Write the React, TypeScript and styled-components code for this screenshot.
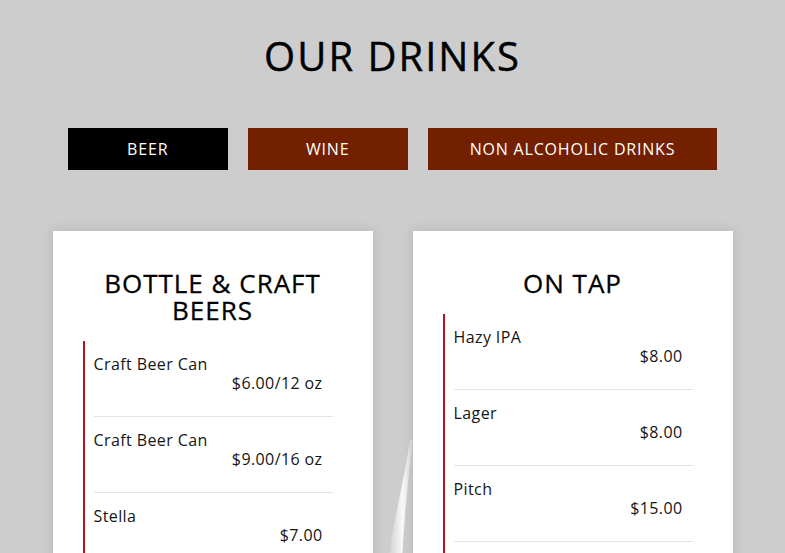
import React, { useState } from 'react';
import styled, { createGlobalStyle } from 'styled-components';

const GlobalStyle = createGlobalStyle`
  * {
    box-sizing: border-box;
  }

  body {
    margin: 0;
    background-color: #cdcdcd;
    font-family: 'Open Sans', 'Liberation Sans', sans-serif;
    color: #111;
  }
`;

const Page = styled.section`
  position: relative;
  min-height: 100vh;
  overflow: hidden;
  padding-top: 29px;
  display: flex;
  flex-direction: column;
  align-items: center;
`;

const Glare = styled.svg`
  position: absolute;
  left: 380px;
  top: 440px;
  width: 50px;
  height: 120px;
  pointer-events: none;
`;

const Title = styled.h1`
  position: relative;
  margin: 0;
  font-size: 40px;
  line-height: 54px;
  font-weight: 500;
  letter-spacing: 2px;
  color: #000;
  -webkit-text-stroke: 0.4px #000;
`;

const TabRow = styled.nav`
  position: relative;
  display: flex;
  gap: 20px;
  margin-top: 45px;
`;

const Tab = styled.button<{ $active: boolean }>`
  min-width: 160px;
  height: 42px;
  padding: 0 42px;
  border: none;
  font-family: inherit;
  font-size: 16px;
  letter-spacing: 0.8px;
  color: #fff;
  cursor: pointer;
  background-color: ${(props) => (props.$active ? '#000' : '#722000')};
`;

const Cards = styled.div`
  position: relative;
  display: flex;
  gap: 40px;
  margin-top: 61px;
`;

const Card = styled.div`
  width: 320px;
  background-color: #fff;
  padding: 39px 30px 0 30px;
  box-shadow: 0 0 12px rgba(0, 0, 0, 0.12);
  min-height: 340px;
`;

const CardTitle = styled.h2`
  margin: 0 0 17px 0;
  text-align: center;
  font-size: 26px;
  line-height: 27px;
  font-weight: 500;
  letter-spacing: 1px;
  color: #000;
  -webkit-text-stroke: 0.3px #000;
`;

const List = styled.ul`
  list-style: none;
  margin: 0 10px 0 0;
  padding: 0 0 0 9px;
  border-left: 2px solid #b3141f;
`;

const Item = styled.li`
  padding: 14px 10px 23px 0;
  border-bottom: 1px solid #e4e4e4;
  font-size: 16px;
  line-height: 19px;
  letter-spacing: 0.4px;
`;

const Name = styled.div`
  color: #151515;
`;

const Price = styled.div`
  text-align: right;
  color: #151515;
`;

const menus = {
  beer: [
    {
      title: 'BOTTLE & CRAFT BEERS',
      items: [
        { name: 'Craft Beer Can', price: '$6.00/12 oz' },
        { name: 'Craft Beer Can', price: '$9.00/16 oz' },
        { name: 'Stella', price: '$7.00' },
        { name: 'Corona', price: '$7.00' },
      ],
    },
    {
      title: 'ON TAP',
      items: [
        { name: 'Hazy IPA', price: '$8.00' },
        { name: 'Lager', price: '$8.00' },
        { name: 'Pitch', price: '$15.00' },
        { name: 'Pitcher', price: '$20.00' },
      ],
    },
  ],
};

const tabs = [
  { key: 'beer', label: 'BEER' },
  { key: 'wine', label: 'WINE' },
  { key: 'non', label: 'NON ALCOHOLIC DRINKS' },
];

const App = (): JSX.Element => {
  const [active, setActive] = useState('beer');
  const sections = menus.beer;

  return (
    <>
      <GlobalStyle />
      <Page>
        <Glare viewBox='0 0 50 120'>
          <defs>
            <linearGradient id='glare' x1='0' y1='0' x2='1' y2='0'>
              <stop offset='0' stopColor='#fff' stopOpacity='0' />
              <stop offset='0.6' stopColor='#fff' stopOpacity='0.9' />
              <stop offset='1' stopColor='#fff' stopOpacity='0.2' />
            </linearGradient>
          </defs>
          <path d='M30 0 C24 40 14 80 8 120 L22 120 C24 80 28 40 33 0 Z' fill='url(#glare)' />
        </Glare>
        <Title>OUR DRINKS</Title>
        <TabRow>
          {tabs.map((tab) => (
            <Tab
              key={tab.key}
              $active={active === tab.key}
              onClick={() => setActive(tab.key)}
            >
              {tab.label}
            </Tab>
          ))}
        </TabRow>
        <Cards>
          {sections.map((section) => (
            <Card key={section.title}>
              <CardTitle>{section.title}</CardTitle>
              <List>
                {section.items.map((item, index) => (
                  <Item key={index}>
                    <Name>{item.name}</Name>
                    <Price>{item.price}</Price>
                  </Item>
                ))}
              </List>
            </Card>
          ))}
        </Cards>
      </Page>
    </>
  );
};

export default App;
